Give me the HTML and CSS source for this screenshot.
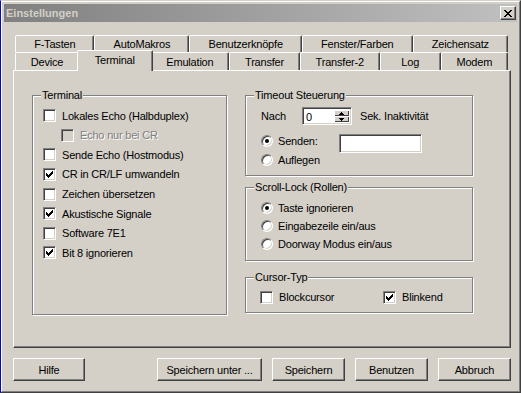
FILE: index.html
```html
<!DOCTYPE html>
<html>
<head>
  <title>Einstellungen</title>
  <link rel="stylesheet" href="styles.css">
</head>
<body>
  <div class="window">
    <div class="frame">
      <div class="titlebar">
        <span class="title">Einstellungen</span>
        <span class="close">
          <svg width="8" height="7" viewBox="0 0 8 7"><path d="M0 0h2v1H0zM6 0h2v1H6zM1 1h2v1H1zM5 1h2v1H5zM2 2h4v1H2zM3 3h2v1H3zM2 4h4v1H2zM1 5h2v1H1zM5 5h2v1H5zM0 6h2v1H0zM6 6h2v1H6z" fill="#000"/></svg>
        </span>
      </div>

      <div class="content">
        <div class="tabs">
          <div class="tab-row tab-row-back">
            <div class="tab">F-Tasten</div>
            <div class="tab">AutoMakros</div>
            <div class="tab">Benutzerknöpfe</div>
            <div class="tab">Fenster/Farben</div>
            <div class="tab">Zeichensatz</div>
          </div>
          <div class="tab-row tab-row-front">
            <div class="tab">Device</div>
            <div class="tab active">Terminal</div>
            <div class="tab">Emulation</div>
            <div class="tab">Transfer</div>
            <div class="tab">Transfer-2</div>
            <div class="tab">Log</div>
            <div class="tab">Modem</div>
          </div>
        </div>

        <div class="panel">
          <div class="group group-terminal">
            <span class="group-title">Terminal</span>
            <label class="check"><span class="box"></span>Lokales Echo (Halbduplex)</label>
            <label class="check disabled indent"><span class="box"></span>Echo nur bei CR</label>
            <label class="check"><span class="box"></span>Sende Echo (Hostmodus)</label>
            <label class="check"><span class="box"><svg width="11" height="11" viewBox="0 0 11 11"><path class="tick" d="M8 2h1v1H8zM7 3h2v1H7zM2 4h1v1H2zM6 4h3v1H6zM2 5h2v1H2zM5 5h3v1H5zM2 6h5v1H2zM3 7h3v1H3zM4 8h1v1H4z"/></svg></span>CR in CR/LF umwandeln</label>
            <label class="check"><span class="box"></span>Zeichen übersetzen</label>
            <label class="check"><span class="box"><svg width="11" height="11" viewBox="0 0 11 11"><path class="tick" d="M8 2h1v1H8zM7 3h2v1H7zM2 4h1v1H2zM6 4h3v1H6zM2 5h2v1H2zM5 5h3v1H5zM2 6h5v1H2zM3 7h3v1H3zM4 8h1v1H4z"/></svg></span>Akustische Signale</label>
            <label class="check"><span class="box"></span>Software 7E1</label>
            <label class="check"><span class="box"><svg width="11" height="11" viewBox="0 0 11 11"><path class="tick" d="M8 2h1v1H8zM7 3h2v1H7zM2 4h1v1H2zM6 4h3v1H6zM2 5h2v1H2zM5 5h3v1H5zM2 6h5v1H2zM3 7h3v1H3zM4 8h1v1H4z"/></svg></span>Bit 8 ignorieren</label>
          </div>

          <div class="column">
            <div class="group group-timeout">
              <span class="group-title">Timeout Steuerung</span>
              <div class="nach-row">
                <span class="nach">Nach</span>
                <span class="spin">
                  <span class="spin-value">0</span>
                  <span class="spin-buttons">
                    <span class="spin-btn"><svg width="5" height="3" viewBox="0 0 5 3"><path d="M2 0h1v1H2zM1 1h3v1H1zM0 2h5v1H0z" fill="#000"/></svg></span>
                    <span class="spin-btn"><svg width="5" height="3" viewBox="0 0 5 3"><path d="M0 0h5v1H0zM1 1h3v1H1zM2 2h1v1H2z" fill="#000"/></svg></span>
                  </span>
                </span>
                <span class="sek">Sek. Inaktivität</span>
              </div>
              <div class="send-row">
                <label class="radio send-label"><span class="dot on"></span>Senden:</label>
                <span class="textbox"></span>
              </div>
              <label class="radio"><span class="dot"></span>Auflegen</label>
            </div>

            <div class="group group-scroll">
              <span class="group-title">Scroll-Lock (Rollen)</span>
              <label class="radio row18"><span class="dot on"></span>Taste ignorieren</label>
              <label class="radio row18"><span class="dot"></span>Eingabezeile ein/aus</label>
              <label class="radio row18"><span class="dot"></span>Doorway Modus ein/aus</label>
            </div>

            <div class="group group-cursor">
              <span class="group-title">Cursor-Typ</span>
              <div class="cursor-row">
                <label class="check block-label"><span class="box"></span>Blockcursor</label>
                <label class="check"><span class="box"><svg width="11" height="11" viewBox="0 0 11 11"><path class="tick" d="M8 2h1v1H8zM7 3h2v1H7zM2 4h1v1H2zM6 4h3v1H6zM2 5h2v1H2zM5 5h3v1H5zM2 6h5v1H2zM3 7h3v1H3zM4 8h1v1H4z"/></svg></span>Blinkend</label>
              </div>
            </div>
          </div>
        </div>

        <div class="buttons">
          <span class="btn">Hilfe</span>
          <div class="button-group">
            <span class="btn btn-wide">Speichern unter ...</span>
            <span class="btn">Speichern</span>
            <span class="btn">Benutzen</span>
            <span class="btn">Abbruch</span>
          </div>
        </div>
      </div>
    </div>
  </div>
</body>
</html>
```

FILE: styles.css
```css
body {
  margin: 0;
  background-color: #d4d0c8;
  font-family: "Liberation Sans", Arial, sans-serif;
  font-size: 11px;
  letter-spacing: -0.2px;
  color: #000;
}

/* window frame */
.window {
  width: 521px;
  height: 393px;
  box-sizing: border-box;
  border: 1px solid;
  border-color: #d4d0c8 #404040 #404040 #0000ff;
}

.frame {
  height: 100%;
  box-sizing: border-box;
  border: 1px solid;
  border-color: #fff #808080 #808080 #fff;
  padding: 2px;
}

.titlebar {
  height: 18px;
  display: flex;
  align-items: center;
  justify-content: space-between;
  padding: 0 1px 0 2px;
  background: linear-gradient(to right, #808080, #c0c0c0);
}

.title {
  color: #d4d0c8;
  font-weight: bold;
  font-size: 11px;
  letter-spacing: 0;
}

.close {
  width: 16px;
  height: 14px;
  box-sizing: border-box;
  display: flex;
  align-items: center;
  justify-content: center;
  background-color: #d4d0c8;
  border: 1px solid;
  border-color: #fff #404040 #404040 #fff;
  box-shadow: inset -1px -1px #808080;
}

.content {
  padding: 13px 0 0 9px;
  width: 498px;
}

/* tabs */
.tabs {
  margin: 0 3px 0 2px;
}

.tab-row {
  display: flex;
}

.tab-row-back {
  height: 17px;
}

.tab-row-front {
  height: 18px;
}

.tab {
  flex: 1 1 auto;
  min-width: 61px;
  display: flex;
  align-items: center;
  justify-content: center;
  padding: 0 6px;
  white-space: nowrap;
  box-sizing: border-box;
  border: 1px solid;
  border-bottom: 0;
  border-color: #fff #404040 transparent #fff;
  border-radius: 2px 2px 0 0;
  box-shadow: inset -1px 0 #808080;
  background-color: #d4d0c8;
}

.tab.active {
  position: relative;
  z-index: 1;
  margin: -2px -2px -1px;
  padding: 0 8px 3px;
}

/* main panel */
.panel {
  height: 278px;
  box-sizing: border-box;
  border: 1px solid;
  border-color: #fff #404040 #404040 #fff;
  box-shadow: inset -1px -1px #808080;
  display: flex;
  align-items: flex-start;
  gap: 18px;
  padding: 24px 0 0 18px;
}

.group {
  position: relative;
  box-sizing: border-box;
  border: 1px solid #808080;
  box-shadow: inset 1px 1px #fff, 1px 1px #fff;
}

.group-title {
  position: absolute;
  top: -7px;
  left: 8px;
  padding: 0 1px;
  line-height: 13px;
  background-color: #d4d0c8;
  white-space: nowrap;
}

.group-terminal {
  width: 195px;
  height: 220px;
  padding: 10px 0 0 10px;
}

.column {
  width: 228px;
  display: flex;
  flex-direction: column;
}

.group-timeout {
  height: 81px;
  padding: 11px 0 0 15px;
}

.group-scroll {
  height: 74px;
  margin-top: 11px;
  padding: 11px 0 0 15px;
}

.group-cursor {
  height: 36px;
  margin-top: 16px;
  padding: 10px 0 0 14px;
}

/* checkboxes */
.check {
  display: flex;
  align-items: center;
  height: 19.57px;
  white-space: nowrap;
}

.box {
  width: 11px;
  height: 11px;
  flex: none;
  margin-right: 6px;
  border: 1px solid;
  border-color: #808080 #fff #fff #808080;
  box-shadow: inset 1px 1px #404040, inset -1px -1px #d4d0c8;
  background-color: #fff;
}

.box svg {
  display: block;
}

.tick {
  fill: #000;
}

.check.indent {
  margin-left: 18px;
}

.check.disabled {
  color: #808080;
  text-shadow: 1px 1px 0 #fff;
}

.check.disabled .box {
  background-color: #d4d0c8;
}

/* radios */
.radio {
  display: flex;
  align-items: center;
  height: 14px;
  white-space: nowrap;
}

.radio.row18 {
  height: 18px;
}

.dot {
  position: relative;
  width: 10px;
  height: 10px;
  flex: none;
  margin-right: 5px;
  border: 1px solid;
  border-radius: 50%;
  border-color: #808080 #fff #fff #808080;
  box-shadow: inset 1px 1px #404040, inset -1px -1px #d4d0c8;
  background-color: #fff;
}

.dot.on::after {
  content: "";
  position: absolute;
  left: 3px;
  top: 3px;
  width: 4px;
  height: 4px;
  border-radius: 50%;
  background-color: #000;
}

/* timeout controls */
.nach-row {
  display: flex;
  align-items: center;
  height: 18px;
}

.nach {
  width: 41px;
}

.spin,
.textbox {
  box-sizing: border-box;
  border: 1px solid;
  border-color: #808080 #fff #fff #808080;
  box-shadow: inset 1px 1px #404040, inset -1px -1px #d4d0c8;
  background-color: #fff;
}

.spin {
  width: 50px;
  height: 18px;
  display: flex;
  align-items: stretch;
  padding: 2px;
}

.spin-value {
  flex: 1;
  line-height: 14px;
  padding-left: 1px;
}

.spin-buttons {
  width: 15px;
  display: flex;
  flex-direction: column;
}

.spin-btn {
  flex: 1;
  display: flex;
  align-items: center;
  justify-content: center;
  background-color: #d4d0c8;
  box-shadow: inset 1px 1px #fff, inset -1px -1px #404040;
}

.spin-btn svg {
  display: block;
}

.sek {
  margin-left: 8px;
}

.send-row {
  display: flex;
  align-items: flex-start;
  margin-top: 9px;
  height: 19px;
}

.send-label {
  width: 78px;
}

.textbox {
  width: 83px;
  height: 19px;
}

/* cursor type */
.cursor-row {
  display: flex;
}

.cursor-row .check {
  height: 18px;
}

.block-label {
  width: 123px;
}

/* bottom buttons */
.buttons {
  display: flex;
  justify-content: space-between;
  margin-top: 10px;
}

.button-group {
  display: flex;
  gap: 10px;
}

.btn {
  width: 73px;
  height: 23px;
  box-sizing: border-box;
  display: flex;
  align-items: center;
  justify-content: center;
  border: 1px solid;
  border-color: #fff #404040 #404040 #fff;
  box-shadow: inset -1px -1px #808080;
  white-space: nowrap;
}

.buttons > .btn {
  width: 72px;
}

.btn-wide {
  width: 105px;
}
```
